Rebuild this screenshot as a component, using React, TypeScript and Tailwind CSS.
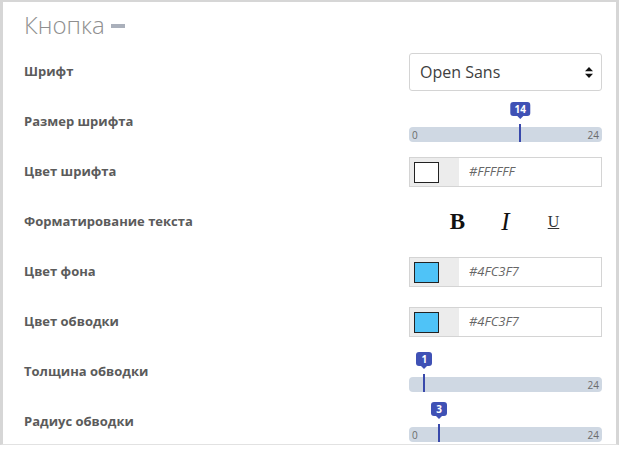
import React from 'react';

const font = { fontFamily: '"Open Sans", "Liberation Sans", sans-serif' };

const Label: React.FC<{ text: string }> = ({ text }) => (
  <span className="text-[13px] font-bold text-[#5b5b5b]">{text}</span>
);

const Slider: React.FC<{ value: number; showMin?: boolean }> = ({ value, showMin = true }) => {
  const left = 8 + value * 7.375;
  return (
    <div className="relative w-[193px] h-[40px]">
      <div className="absolute left-0 right-0 bottom-0 h-[15px] rounded-[4px] bg-[#cfd8e3] flex items-center justify-between px-[3px] text-[10px] leading-none text-[#6b6b6b]">
        <span>{showMin ? '0' : ''}</span>
        <span>24</span>
      </div>
      <div style={{ left }} className="absolute bottom-0 h-[18px] w-[2px] -translate-x-1/2 bg-[#3949ab]" />
      <div style={{ left }} className="absolute top-0 -translate-x-1/2 flex flex-col items-center">
        <div className="h-[14px] min-w-[16px] px-[4px] rounded-[3px] bg-[#3f51b5] text-white text-[10px] font-bold leading-[14px] text-center">
          {value}
        </div>
        <div className="w-0 h-0 border-l-[3px] border-r-[3px] border-t-[3px] border-l-transparent border-r-transparent border-t-[#3f51b5]" />
      </div>
    </div>
  );
};

const ColorInput: React.FC<{ color: string; hex: string }> = ({ color, hex }) => (
  <div className="flex w-[193px] h-[30px] border border-[#d4d4d4]">
    <div className="w-[49px] bg-[#ececec] flex items-center pl-[4px]">
      <div style={{ backgroundColor: color }} className="w-[25px] h-[21px] border border-[#222]" />
    </div>
    <div className="flex items-center pl-[10px] text-[13px] italic text-[#666]">{hex}</div>
  </div>
);

const Row: React.FC<{ label: string; children: React.ReactNode }> = ({ label, children }) => (
  <div className="h-[50px] flex items-center justify-between">
    <Label text={label} />
    <div className="w-[193px] flex justify-center">{children}</div>
  </div>
);

export default function App() {
  return (
    <div style={font} className="w-[619px] h-[450px] bg-white overflow-hidden">
      <div className="h-[445px] border-l-[3px] border-t-[2px] border-r-[3px] border-[#d6d6d6] border-b border-b-[#e2e2e2] pl-[21px] pr-[14px]">
        <div className="h-[45px] flex items-center gap-[6px] pt-[1px]">
          <span className="text-[24px] font-light text-[#8f8f8f] leading-none">Кнопка</span>
          <div className="w-[14px] h-[4px] bg-[#aab0bb] mt-[1px]" />
        </div>

        <Row label="Шрифт">
          <div className="w-[193px] h-[38px] border border-[#d4d4d4] rounded-[3px] flex items-center justify-between pl-[10px] pr-[8px]">
            <span className="text-[16px] text-[#3e3e3e]">Open Sans</span>
            <svg width="8" height="11" viewBox="0 0 8 11">
              <path d="M4 0L8 4.2H0Z M4 11L8 6.8H0Z" fill="#111" />
            </svg>
          </div>
        </Row>

        <Row label="Размер шрифта">
          <Slider value={14} />
        </Row>

        <Row label="Цвет шрифта">
          <ColorInput color="#FFFFFF" hex="#FFFFFF" />
        </Row>

        <Row label="Форматирование текста">
          <div className="flex items-center gap-[30px] text-[#111]" style={{ fontFamily: '"Liberation Serif", serif' }}>
            <span className="w-[18px] text-center text-[23px] font-bold">B</span>
            <span className="w-[18px] text-center text-[25px] italic">I</span>
            <span className="w-[18px] text-center text-[16px] underline text-[#333]">U</span>
          </div>
        </Row>

        <Row label="Цвет фона">
          <ColorInput color="#4FC3F7" hex="#4FC3F7" />
        </Row>

        <Row label="Цвет обводки">
          <ColorInput color="#4FC3F7" hex="#4FC3F7" />
        </Row>

        <Row label="Толщина обводки">
          <Slider value={1} showMin={false} />
        </Row>

        <Row label="Радиус обводки">
          <Slider value={3} />
        </Row>
      </div>
    </div>
  );
}
